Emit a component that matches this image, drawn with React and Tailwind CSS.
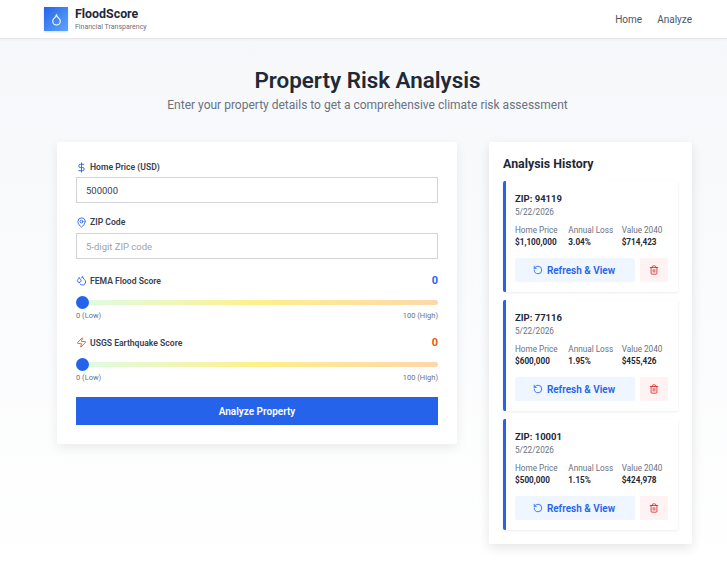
import React from 'react';
import { Droplet, Droplets, DollarSign, MapPin, Zap, RotateCcw, Trash2 } from 'lucide-react';

const font = "[font-family:Roboto,sans-serif]";

const history = [
    { zip: '94119', date: '5/22/2026', price: '$1,100,000', loss: '3.04%', value: '$714,423' },
    { zip: '77116', date: '5/22/2026', price: '$600,000', loss: '1.95%', value: '$455,426' },
    { zip: '10001', date: '5/22/2026', price: '$500,000', loss: '1.15%', value: '$424,978' },
];

const Score = ({ icon, label, color }) => (
    <div>
        <div className="flex items-center justify-between h-[16px]">
            <label className="flex items-center text-[8.6px] font-semibold text-[#374151]">
                {icon}
                {label}
            </label>
            <span className={`text-[11px] font-bold ${color}`}>0</span>
        </div>
        <input
            type="range"
            min="0"
            max="100"
            defaultValue="0"
            className="mt-[11px] block w-full h-[5px] rounded-full appearance-none bg-gradient-to-r from-[#dcfce7] via-[#fef08a] to-[#fed7aa] [&::-webkit-slider-thumb]:appearance-none [&::-webkit-slider-thumb]:w-[13px] [&::-webkit-slider-thumb]:h-[13px] [&::-webkit-slider-thumb]:rounded-full [&::-webkit-slider-thumb]:bg-[#2563eb]"
        />
        <div className="flex justify-between mt-[5px] text-[7.5px] leading-[12px] text-[#6b7280]">
            <span>0 (Low)</span>
            <span>100 (High)</span>
        </div>
    </div>
);

const Stat = ({ label, value }) => (
    <div>
        <div className="text-[8.2px] leading-[12px] text-[#6b7280] whitespace-nowrap">{label}</div>
        <div className="text-[8.2px] leading-[12px] font-bold text-[#1f2937] whitespace-nowrap">{value}</div>
    </div>
);

const HistoryCard = ({ item }) => (
    <div className="bg-white border-l-[3px] border-[#2563eb] rounded-[2px] shadow-[0_1px_3px_rgba(0,0,0,0.08)] pl-[9px] pr-[10px] pt-[11px] pb-[10px]">
        <div className="text-[9.5px] leading-[14px] font-bold text-[#1f2937]">ZIP: {item.zip}</div>
        <div className="text-[8.2px] leading-[12px] text-[#6b7280]">{item.date}</div>
        <div className="grid grid-cols-3 gap-x-[7px] mt-[6px]">
            <Stat label="Home Price" value={item.price} />
            <Stat label="Annual Loss" value={item.loss} />
            <Stat label="Value 2040" value={item.value} />
        </div>
        <div className="flex gap-[5px] mt-[10px]">
            <button className="flex-1 h-[24px] rounded-[2px] bg-[#eff6ff] text-[#2563eb] text-[10px] font-semibold flex items-center justify-center gap-[4px] pr-[2px]">
                <RotateCcw size={10} />
                Refresh & View
            </button>
            <button className="w-[28px] h-[24px] rounded-[2px] bg-[#fef2f2] text-[#dc2626] flex items-center justify-center">
                <Trash2 size={10} />
            </button>
        </div>
    </div>
);

const App = () => {
    return (
        <div className={`${font} min-h-[573px] bg-gradient-to-b from-[#f5f7fa] to-white`}>
            {/* Header */}
            <header className="h-[39px] bg-white border-b border-[#e5e7eb] shadow-[0_1px_2px_rgba(0,0,0,0.04)] flex items-center justify-between pl-[44px] pr-[35px]">
                <div className="flex items-center gap-[7px]">
                    <div className="w-[24px] h-[24px] bg-gradient-to-br from-[#2563eb] to-[#60a5fa] shadow-sm flex items-center justify-center text-white">
                        <Droplet size={13} />
                    </div>
                    <div>
                        <div className="text-[12.4px] leading-[15px] font-bold text-[#1f2937]">FloodScore</div>
                        <div className="text-[7px] leading-[10px] mt-[1px] text-[#6b7280]">Financial Transparency</div>
                    </div>
                </div>
                <nav className="flex gap-[15px] text-[10px] text-[#4b5563]">
                    <span>Home</span>
                    <span>Analyze</span>
                </nav>
            </header>

            <main className="pl-[57px] pr-[35px] pt-[26px] pb-[29px]">
                <div className="text-center pr-[14px]">
                    <h1 className="text-[22.4px] leading-[30px] font-semibold text-[#1f2937]">Property Risk Analysis</h1>
                    <p className="text-[12px] leading-[18px] mt-[1px] text-[#6b7280]">
                        Enter your property details to get a comprehensive climate risk assessment
                    </p>
                </div>

                <div className="flex items-start gap-[32px] mt-[28px]">
                    {/* Form */}
                    <section className="w-[400px] bg-white rounded-[2px] shadow-[0_4px_12px_rgba(0,0,0,0.08)] px-[19px] pt-[18px] pb-[19px]">
                        <label className="flex items-center text-[8.6px] font-semibold text-[#374151] h-[14px]">
                            <DollarSign size={11} className="text-[#2563eb] mr-[3px]" />
                            Home Price (USD)
                        </label>
                        <input
                            defaultValue="500000"
                            className="mt-[3px] block w-full h-[26px] border border-[#d1d5db] px-[9px] text-[9.5px] text-[#374151] outline-none"
                        />
                        <label className="mt-[12px] flex items-center text-[8.6px] font-semibold text-[#374151] h-[14px]">
                            <MapPin size={11} className="text-[#2563eb] mr-[3px]" />
                            ZIP Code
                        </label>
                        <input
                            placeholder="5-digit ZIP code"
                            className="mt-[4px] block w-full h-[26px] border border-[#d1d5db] px-[9px] text-[9.5px] text-[#374151] placeholder:text-[#9ca3af] outline-none"
                        />
                        <div className="mt-[14px]">
                            <Score
                                icon={<Droplets size={11} className="text-[#2563eb] mr-[3px]" />}
                                label="FEMA Flood Score"
                                color="text-[#2563eb]"
                            />
                        </div>
                        <div className="mt-[13px]">
                            <Score
                                icon={<Zap size={11} className="text-[#ea580c] mr-[3px]" />}
                                label="USGS Earthquake Score"
                                color="text-[#ea580c]"
                            />
                        </div>
                        <button className="mt-[13px] w-full h-[28px] bg-[#2563eb] text-white text-[10px] font-semibold">
                            Analyze Property
                        </button>
                    </section>

                    {/* History */}
                    <aside className="w-[203px] bg-white rounded-[2px] shadow-[0_4px_12px_rgba(0,0,0,0.1)] px-[14px] pt-[13px] pb-[14px]">
                        <h2 className="text-[12.4px] leading-[18px] font-bold text-[#1f2937] mb-[8px]">Analysis History</h2>
                        <div className="flex flex-col gap-[8px]">
                            {history.map((item) => (
                                <HistoryCard key={item.zip} item={item} />
                            ))}
                        </div>
                    </aside>
                </div>
            </main>
        </div>
    );
};

export default App;
